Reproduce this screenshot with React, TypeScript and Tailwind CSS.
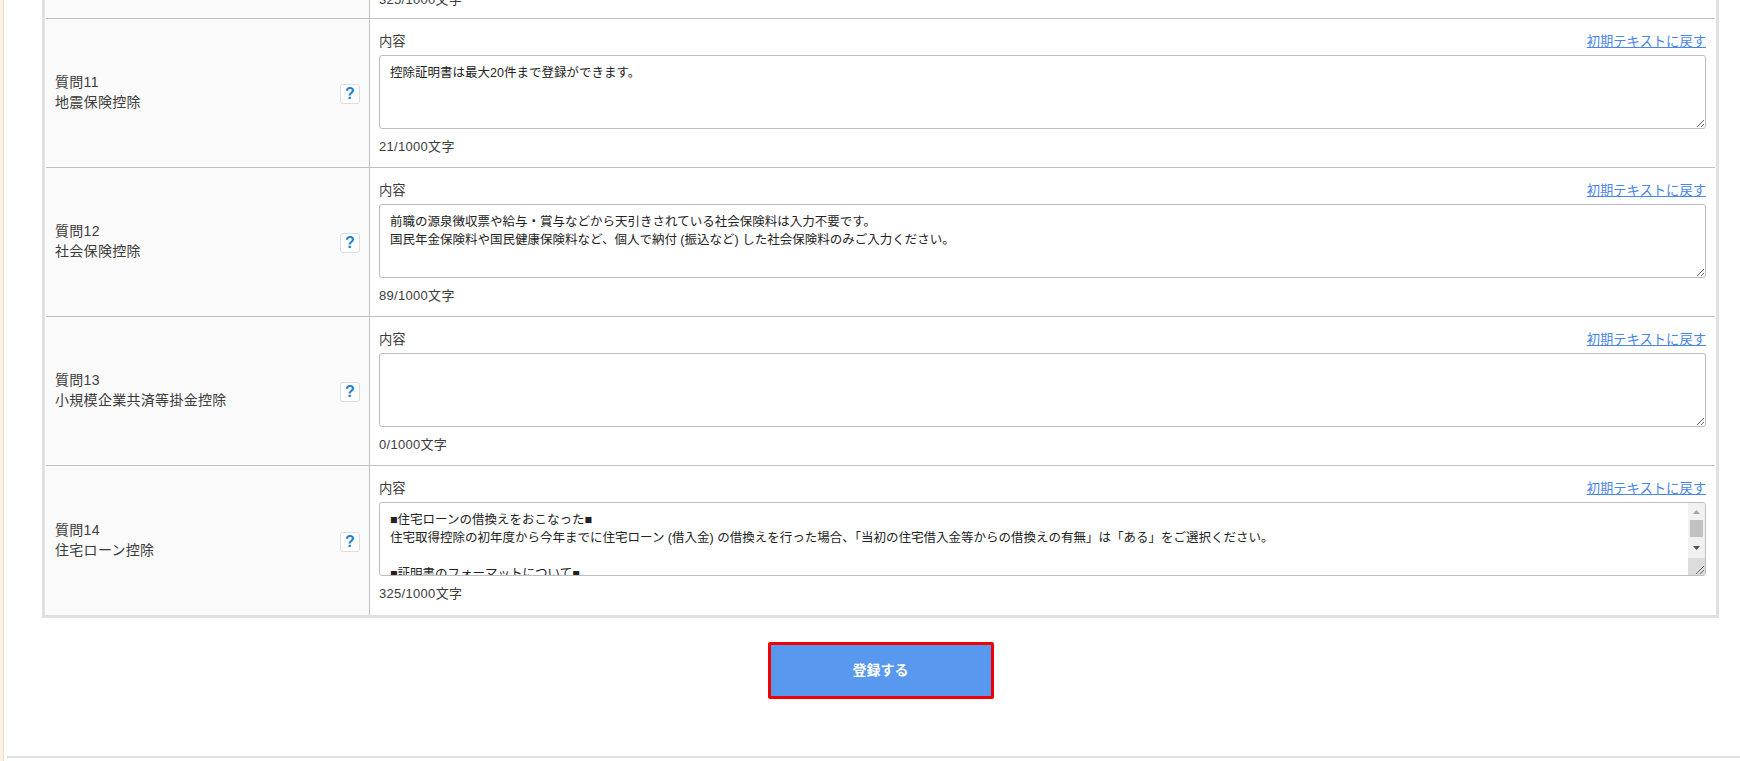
const font = "[font-family:'Liberation_Sans','Noto_Sans_CJK_JP',sans-serif]";

type Row = { no: number; title: string; text: string; count: number; scroll?: boolean };

const rows: Row[] = [
  { no: 11, title: "地震保険控除", text: "控除証明書は最大20件まで登録ができます。", count: 21 },
  {
    no: 12,
    title: "社会保険控除",
    text: "前職の源泉徴収票や給与・賞与などから天引きされている社会保険料は入力不要です。\n国民年金保険料や国民健康保険料など、個人で納付 (振込など) した社会保険料のみご入力ください。",
    count: 89,
  },
  { no: 13, title: "小規模企業共済等掛金控除", text: "", count: 0 },
  {
    no: 14,
    title: "住宅ローン控除",
    text: "■住宅ローンの借換えをおこなった■\n住宅取得控除の初年度から今年までに住宅ローン (借入金) の借換えを行った場合、「当初の住宅借入金等からの借換えの有無」は「ある」をご選択ください。\n\n■証明書のフォーマットについて■\n証明書のフォーマットは年によって異なる場合があります。",
    count: 325,
    scroll: true,
  },
];

const FakeScrollbar = () => {
  return (
    <div className="absolute bottom-[1px] right-[1px] top-[1px] flex w-[17px] flex-col rounded-r-[2px] bg-[#f1f1f1]">
      <div className="flex h-[17px] items-center justify-center">
        <svg width="9" height="6" viewBox="0 0 9 6"><path d="M4.5 1 8 5H1Z" fill="#a3a3a3" /></svg>
      </div>
      <div className="mx-[2px] h-[17px] bg-[#c1c1c1]"></div>
      <div className="flex flex-1 items-center justify-center">
        <svg width="9" height="6" viewBox="0 0 9 6"><path d="M1 1h7L4.500 5Z" fill="#505050" /></svg>
      </div>
      <div className="flex h-[17px] items-end justify-end bg-[#dcdcdc]">
        <svg width="10" height="10" viewBox="0 0 10 10">
          <path d="M1 9 9 1M5 9 9 5" stroke="#666" strokeWidth="1" />
        </svg>
      </div>
    </div>
  );
};

const QuestionRow = ({ row, last }: { row: Row; last: boolean }) => {
  return (
    <div className={`flex h-[149px] ${last ? "" : "border-b border-[#c0c0c0]"}`}>
      <div className="flex w-[324px] shrink-0 items-center justify-between border-r border-[#c0c0c0] bg-[#fafafa] px-[9px]">
        <div className="-mt-[2px] text-[14px] leading-[20px] tracking-[0.3px] text-[#3c3c3c]">
          <p>質問{row.no}</p>
          <p>{row.title}</p>
        </div>
        <span className="mt-[2px] flex h-[20px] w-[20px] items-center justify-center rounded-[3px] border border-[#d8dfe4] bg-white text-[16px] font-bold text-[#1f7fd0]">
          ?
        </span>
      </div>
      <div className="flex-1 px-[9px] pt-[13px]">
        <div className="flex h-[20px] items-center justify-between text-[13.3px]">
          <span className="text-[#3c3c3c]">内容</span>
          <a href="#" className="text-[#4a86e8] underline">初期テキストに戻す</a>
        </div>
        <div className="relative mt-[3px]">
          <textarea
            readOnly
            defaultValue={row.text}
            className={`block h-[74px] w-full overflow-hidden rounded-[3px] border border-[#bdbdbd] bg-white px-[10px] pb-[6px] pt-[8px] text-[12.5px] leading-[18px] text-[#222] outline-none ${row.scroll ? "resize-none" : ""}`}
          />
          {row.scroll && <FakeScrollbar />}
        </div>
        <p className="mt-[8px] h-[20px] text-[13px] leading-[20px] tracking-[0.3px] text-[#3c3c3c]">{row.count}/1000文字</p>
      </div>
    </div>
  );
};

export default function App() {
  return (
    <div className={`flex h-[761px] overflow-hidden bg-white ${font}`}>
      <div className="w-[4px] shrink-0 border-r border-[#ecdccb] bg-[#fbf1e4]"></div>
      <div className="flex-1">
        <div className="ml-[38px] w-[1677px] border-x-[3px] border-b-[3px] border-[#e0e0e0] px-[1px]">
          <div className="flex h-[19px] overflow-hidden border-b border-[#c0c0c0]">
            <div className="w-[324px] shrink-0 border-r border-[#c0c0c0] bg-[#fafafa]"></div>
            <div className="flex flex-1 flex-col justify-end px-[9px] pb-[8px]">
              <p className="h-[20px] shrink-0 text-[13px] leading-[20px] tracking-[0.3px] text-[#3c3c3c]">325/1000文字</p>
            </div>
          </div>
          {rows.map((row, i) => (
            <QuestionRow key={row.no} row={row} last={i === rows.length - 1} />
          ))}
        </div>
        <div className="ml-[38px] mt-[24px] flex w-[1677px] justify-center">
          <button className="h-[57px] w-[226px] rounded-[2px] border-[3px] border-[#f00000] bg-[#5898ef] text-[14px] font-bold text-white">
            登録する
          </button>
        </div>
        <div className="ml-[3px] mt-[57px] border-t-2 border-[#e0e0e0]"></div>
      </div>
    </div>
  );
}
